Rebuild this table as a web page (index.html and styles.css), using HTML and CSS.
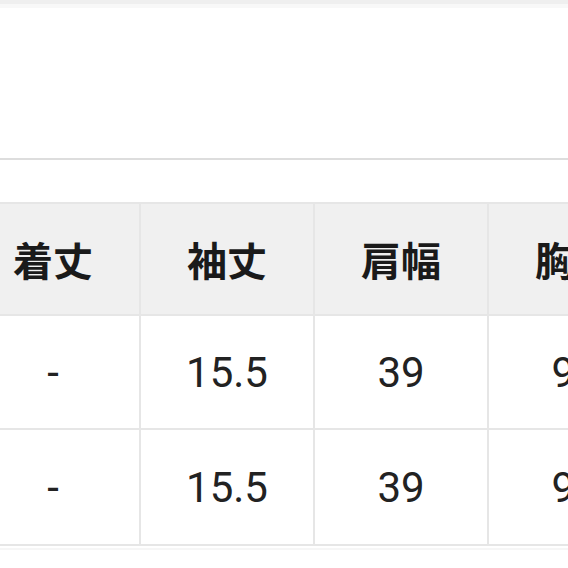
FILE: index.html
```html
<!DOCTYPE html>
<html lang="ja">
<head>
<meta charset="utf-8">
<link rel="stylesheet" href="styles.css">
</head>
<body>
<div class="topbar"></div>
<div class="topshade"></div>
<div class="spacer"></div>
<div class="divider"></div>
<div class="gap"></div>
<div class="table-wrap">
  <table class="size-table">
    <thead>
      <tr class="head-row">
        <th>着丈</th><th>袖丈</th><th>肩幅</th><th>胸囲</th>
      </tr>
    </thead>
    <tbody>
      <tr class="row-a">
        <td>-</td><td>15.5</td><td>39</td><td>96</td>
      </tr>
      <tr class="row-b">
        <td>-</td><td>15.5</td><td>39</td><td>96</td>
      </tr>
    </tbody>
  </table>
</div>
<div class="bottom-line"></div>
</body>
</html>
```
FILE: styles.css
```css
html, body {
  margin: 0;
  padding: 0;
  background: #ffffff;
}
body {
  width: 568px;
  height: 568px;
  overflow: hidden;
  font-family: Roboto, "Noto Sans CJK JP", sans-serif;
}
.topbar {
  height: 4px;
  background: #efefef;
}
.topshade {
  height: 4px;
  background: #f8f8f8;
}
.spacer {
  height: 150px;
}
.divider {
  height: 2px;
  background: #dddddd;
}
.gap {
  height: 42px;
}
.table-wrap {
  width: 568px;
  overflow: hidden;
}
.size-table {
  margin-left: -35px;
  border-collapse: collapse;
  table-layout: fixed;
  width: 698px;
}
.size-table th,
.size-table td {
  width: 172px;
  border: 2px solid #e6e6e6;
  text-align: center;
  vertical-align: middle;
  padding: 0;
}
.size-table th {
  height: 110px;
  background: #f0f0f0;
  font-family: "Noto Sans CJK JP", sans-serif;
  font-weight: 700;
  font-size: 40px;
  color: #1a1a1a;
}
.size-table td {
  font-family: Roboto, sans-serif;
  font-size: 42px;
  color: #222222;
}
.row-a td {
  height: 112px;
}
.row-b td {
  height: 114px;
}
.bottom-line {
  margin-top: 2px;
  height: 2px;
  background: #f6f6f6;
}
```
